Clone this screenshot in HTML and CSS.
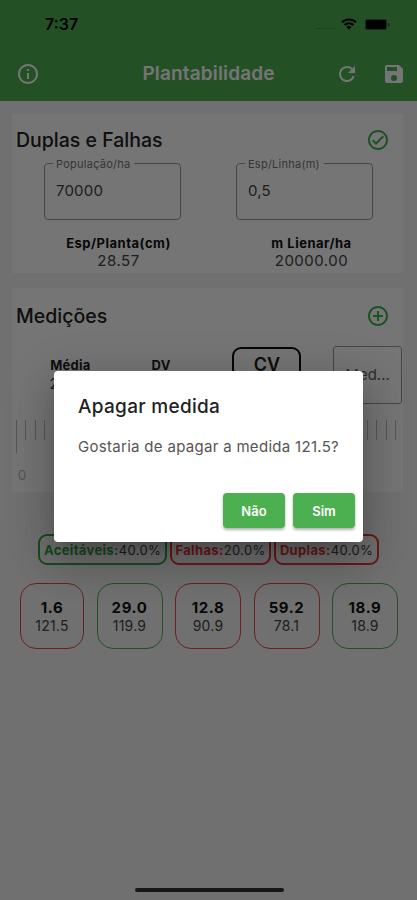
FILE: index.html
```html
<!DOCTYPE html>
<html lang="pt-BR">
<head>
    <meta charset="UTF-8">
    <meta name="viewport" content="width=device-width, initial-scale=1.0">
    <title>Plantabilidade</title>
    <link rel="stylesheet" href="styles.css">
</head>
<body>
    <div class="app">
        <header class="header">
            <div class="status-bar">
                <span class="time">7:37</span>
                <span class="signal"></span>
                <svg class="wifi" viewBox="0 0 16 12" width="16" height="12">
                    <path d="M1 4.3a10 10 0 0 1 14 0M3.5 7a6.4 6.4 0 0 1 9 0" fill="none" stroke="#000" stroke-width="2"/>
                    <path d="M5.4 9a3.8 3.8 0 0 1 5.2 0L8 11.7z"/>
                </svg>
                <svg class="battery" viewBox="0 0 26 11" width="26" height="11">
                    <rect x="0" y="0" width="22" height="11" rx="2.5" opacity=".4"/>
                    <rect x="1" y="1" width="20" height="9" rx="1"/>
                    <path d="M23 3.5q3 2 0 4z" opacity=".5"/>
                </svg>
            </div>
            <div class="app-bar">
                <svg class="icon" viewBox="0 0 24 24"><path d="M11 7h2v2h-2zm0 4h2v6h-2zm1-9C6.48 2 2 6.48 2 12s4.48 10 10 10 10-4.48 10-10S17.52 2 12 2zm0 18c-4.41 0-8-3.59-8-8s3.59-8 8-8 8 3.59 8 8-3.59 8-8 8z"/></svg>
                <h1>Plantabilidade</h1>
                <svg class="icon refresh" viewBox="0 0 24 24"><path d="M17.65 6.35A7.95 7.95 0 0 0 12 4a8 8 0 1 0 7.73 10h-2.08A6 6 0 1 1 12 6c1.66 0 3.14.69 4.22 1.78L13 11h7V4z"/></svg>
                <svg class="icon" viewBox="0 0 24 24"><path d="M17 3H5a2 2 0 0 0-2 2v14a2 2 0 0 0 2 2h14c1.1 0 2-.9 2-2V7zm-5 16a3 3 0 1 1 0-6 3 3 0 0 1 0 6zm3-10H5V5h10z"/></svg>
            </div>
        </header>

        <main>
            <section class="card">
                <div class="card-head">
                    <h2>Duplas e Falhas</h2>
                    <svg class="icon green" viewBox="0 0 24 24"><path d="M16.59 7.58 10 14.17l-2.59-2.58L6 13l4 4 8-8zM12 2C6.48 2 2 6.48 2 12s4.48 10 10 10 10-4.48 10-10S17.52 2 12 2zm0 18c-4.42 0-8-3.58-8-8s3.58-8 8-8 8 3.58 8 8-3.58 8-8 8z"/></svg>
                </div>
                <div class="fields">
                    <fieldset><legend>População/ha</legend><span>70000</span></fieldset>
                    <fieldset><legend>Esp/Linha(m)</legend><span>0,5</span></fieldset>
                </div>
                <div class="results">
                    <div><b>Esp/Planta(cm)</b><span>28.57</span></div>
                    <div><b>m Lienar/ha</b><span>20000.00</span></div>
                </div>
            </section>

            <section class="card measures">
                <div class="card-head">
                    <h2>Medições</h2>
                    <svg class="icon green" viewBox="0 0 24 24"><path d="M13 7h-2v4H7v2h4v4h2v-4h4v-2h-4zm-1-5C6.48 2 2 6.48 2 12s4.48 10 10 10 10-4.48 10-10S17.52 2 12 2zm0 18c-4.41 0-8-3.59-8-8s3.59-8 8-8 8 3.59 8 8-3.59 8-8 8z"/></svg>
                </div>
                <div class="stats">
                    <div class="stat"><b>Média</b><span>24.30</span></div>
                    <div class="stat"><b>DV</b><span>19.70</span></div>
                    <div class="cv">CV</div>
                    <div class="med">Med...</div>
                </div>
                <div class="ruler"></div>
                <div class="ruler-label">0</div>
            </section>

            <div class="chips">
                <div class="chip ok"><b>Aceitáveis:</b>40.0%</div>
                <div class="chip bad falhas"><b>Falhas:</b>20.0%</div>
                <div class="chip bad duplas"><b>Duplas:</b>40.0%</div>
            </div>

            <div class="boxes">
                <div class="box bad"><b>1.6</b><span>121.5</span></div>
                <div class="box ok"><b>29.0</b><span>119.9</span></div>
                <div class="box bad"><b>12.8</b><span>90.9</span></div>
                <div class="box bad"><b>59.2</b><span>78.1</span></div>
                <div class="box ok"><b>18.9</b><span>18.9</span></div>
            </div>
        </main>
        <div class="home-bar"></div>
    </div>

    <div class="scrim">
        <div class="dialog">
            <h3>Apagar medida</h3>
            <p>Gostaria de apagar a medida 121.5?</p>
            <div class="actions">
                <button>Não</button>
                <button>Sim</button>
            </div>
        </div>
    </div>
</body>
</html>
```
FILE: styles.css
```css
* {
    box-sizing: border-box;
}
body {
    margin: 0;
    font-family: Inter, Roboto, sans-serif;
    color: #444;
}
h1, h2, h3, p {
    margin: 0;
    font-weight: 500;
}
.app {
    display: flex;
    flex-direction: column;
    height: 900px;
    background-color: #f5f5f5;
    overflow: hidden;
}
.header {
    height: 101px;
    background-color: #4caf50;
}
.status-bar {
    display: flex;
    align-items: center;
    height: 47px;
    padding: 1px 26px 0 45px;
    color: #000;
}
.time {
    flex: 1;
    font-size: 16px;
    font-weight: 600;
}
.signal {
    width: 20px;
    margin: 8px 5px 0 0;
    border-top: 1px dotted #347c38;
}
.battery {
    margin-left: 8px;
}
.app-bar {
    display: flex;
    align-items: center;
    height: 53px;
    padding: 0 11px 0 16px;
}
.app-bar h1 {
    flex: 1;
    padding-left: 42px;
    text-align: center;
    font-size: 19px;
    font-weight: 600;
    letter-spacing: 0.15px;
    color: #fff;
}
.icon {
    width: 24px;
    height: 24px;
    fill: #fff;
}
.refresh {
    margin-right: 23px;
}
.green {
    fill: #3bb34f;
}
main {
    padding: 13px 14px 0 12px;
}
.card {
    height: 159px;
    padding: 13px 0 0 4px;
    background-color: #fff;
}
.card-head {
    display: flex;
    justify-content: space-between;
    align-items: center;
    height: 25px;
    padding-right: 13px;
}
h2 {
    font-size: 19.5px;
    color: #222;
}
.fields {
    display: flex;
    gap: 55px;
    padding: 5px 0 0 28px;
}
fieldset {
    width: 137px;
    height: 63px;
    margin: 0;
    padding: 0 0 0 11px;
    border: 1px solid #999;
    border-radius: 4px;
}
legend {
    height: 12px;
    margin-left: -3px;
    padding: 0 4px 0 3px;
    font-size: 11px;
    line-height: 15px;
    letter-spacing: 0.25px;
    color: #777;
}
fieldset span {
    display: block;
    padding-top: 13px;
    font-size: 15px;
    line-height: 18px;
    letter-spacing: 0.2px;
}
.results {
    display: grid;
    grid-template-columns: 193px 193px;
    padding: 14px 0 0 6px;
    text-align: center;
}
.results b, .results span {
    display: block;
    font-size: 13px;
    line-height: 18px;
    letter-spacing: 0.5px;
}
.results b {
    color: #111;
}
.results span {
    font-size: 15px;
}
.measures {
    height: 204px;
    margin-top: 15px;
    padding-top: 15px;
}
.stats {
    display: flex;
    height: 72px;
    padding: 18px 1px 0 9px;
}
.stat {
    width: 91px;
    padding-top: 11px;
    text-align: center;
}
.stat b, .stat span {
    display: block;
    font-size: 13px;
    line-height: 17px;
    letter-spacing: 0.2px;
}
.stat b {
    color: #222;
}
.stat span {
    font-size: 15px;
    line-height: 19px;
}
.cv {
    width: 69px;
    height: 54px;
    margin: 1px 32px 0 26px;
    padding-top: 5px;
    border: 2px solid #111;
    border-radius: 9px;
    text-align: center;
    font-size: 18px;
    font-weight: 600;
    color: #222;
}
.med {
    width: 69px;
    height: 58px;
    border: 1px solid #999;
    border-radius: 3px;
    text-align: center;
    font-size: 15px;
    line-height: 56px;
    color: #666;
}
.ruler {
    height: 33px;
    margin: 20px 5px 0 0;
    background:
        linear-gradient(#bbb, #bbb) 0 0 / 1px 33px no-repeat,
        repeating-linear-gradient(90deg, #bbb 0 1px, transparent 1px 9.48px) 0 0 / 100% 20px no-repeat;
}
.ruler-label {
    padding: 14px 0 0 2px;
    font-size: 13px;
    color: #b5b5b5;
}
.chips {
    display: flex;
    gap: 3px;
    margin: 42px 0 0 26px;
}
.chip {
    display: flex;
    align-items: center;
    justify-content: center;
    width: 129px;
    height: 31px;
    border: 2px solid;
    border-radius: 9px;
    font-size: 13px;
    letter-spacing: 0.35px;
    white-space: nowrap;
}
.chip.ok {
    border-color: #35a344;
}
.chip.bad {
    border-color: #e53935;
}
.falhas {
    width: 101px;
}
.duplas {
    width: 105px;
}
.ok b {
    color: #35a344;
}
.bad b {
    color: #e53935;
}
.boxes {
    display: flex;
    justify-content: space-between;
    margin: 18px 5px 0 8px;
}
.box {
    display: flex;
    flex-direction: column;
    align-items: center;
    width: 66px;
    height: 66px;
    padding-top: 15px;
    border: 1px solid;
    border-radius: 16px;
    font-size: 14px;
    line-height: 18px;
    letter-spacing: 0.2px;
}
.box:first-child {
    width: 64px;
}
.box b {
    font-size: 15px;
    letter-spacing: 0.6px;
    color: #111;
}
.box.ok {
    border-color: #4caf50;
}
.box.bad {
    border-color: #e54a45;
}
.home-bar {
    width: 149px;
    height: 4px;
    margin: auto auto 8px 135px;
    border-radius: 2px;
    background-color: #333;
}
.scrim {
    position: absolute;
    top: 0;
    left: 0;
    display: flex;
    width: 100%;
    height: 900px;
    background-color: rgba(0, 0, 0, 0.54);
}
.dialog {
    width: 309px;
    height: 171px;
    margin: 371px 0 0 54px;
    padding: 24px 8px 0 24px;
    border-radius: 4px;
    background-color: #fff;
    box-shadow: 0 11px 15px -7px rgba(0, 0, 0, 0.2), 0 24px 38px 3px rgba(0, 0, 0, 0.14), 0 9px 46px 8px rgba(0, 0, 0, 0.12);
}
.dialog h3 {
    font-size: 19px;
    line-height: 24px;
    letter-spacing: 0.3px;
    color: #222;
}
.dialog p {
    padding-top: 18px;
    font-size: 15px;
    font-weight: 400;
    line-height: 20px;
    letter-spacing: 0.3px;
    color: #555;
    white-space: nowrap;
}
.actions {
    display: flex;
    justify-content: flex-end;
    gap: 8px;
    margin-top: 36px;
}
.actions button {
    width: 62px;
    height: 35px;
    padding: 0;
    border: 0;
    border-radius: 4px;
    background-color: #4caf50;
    box-shadow: 0 2px 3px rgba(0, 0, 0, 0.3);
    font-family: inherit;
    font-size: 13px;
    font-weight: 600;
    color: #fff;
}
```
